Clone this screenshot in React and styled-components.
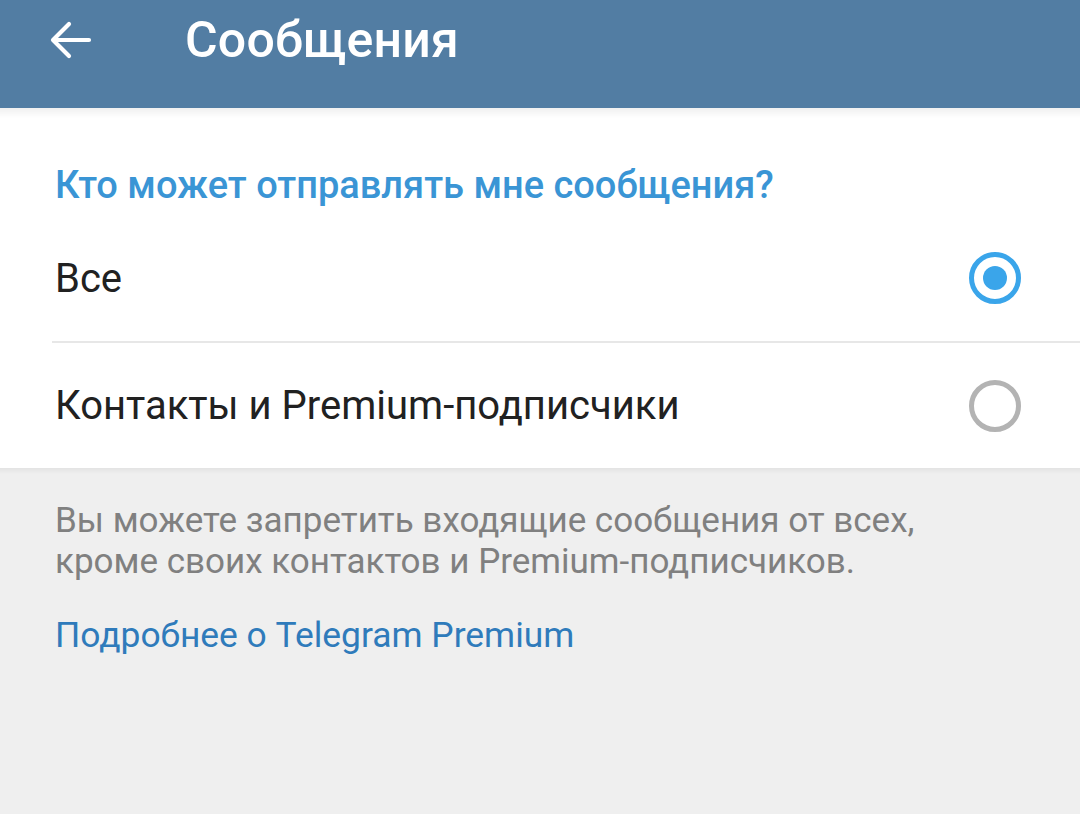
import React from 'react';
import styled, { createGlobalStyle } from 'styled-components';

const GlobalStyle = createGlobalStyle`
    html, body {
        margin: 0;
        padding: 0;
        background: #efefef;
        font-family: Roboto, 'Noto Sans', sans-serif;
    }
`;

const Page = styled.div`
    width: 1080px;
    height: 814px;
    overflow: hidden;
    background: #efefef;
`;

const Header = styled.header`
    position: relative;
    height: 108px;
    background: #527da3;
    display: flex;
    align-items: center;
    padding-bottom: 28px;
    box-sizing: border-box;
    padding-left: 48px;
    z-index: 1;

    &::after {
        content: '';
        position: absolute;
        left: 0;
        right: 0;
        top: 100%;
        height: 10px;
        background: linear-gradient(rgba(0, 0, 0, 0.06), rgba(0, 0, 0, 0));
    }
`;

const BackButton = styled.button`
    border: 0;
    background: none;
    padding: 0;
    width: 46px;
    height: 46px;
    display: flex;
    align-items: center;
    justify-content: center;
    cursor: pointer;
`;

const Title = styled.h1`
    margin: 0 0 0 91px;
    color: #fff;
    font-size: 50px;
    font-weight: 500;
    letter-spacing: 0.2px;
`;

const Card = styled.section`
    background: #fff;
    padding-top: 48px;
`;

const SectionTitle = styled.h2`
    margin: 0;
    padding-left: 55px;
    color: #3a95d5;
    font-size: 38px;
    font-weight: 500;
    line-height: 59px;
`;

const Option = styled.label`
    display: flex;
    align-items: center;
    justify-content: space-between;
    height: ${(props) => props.height}px;
    margin-left: 52px;
    padding-left: 3px;
    padding-right: 59px;
    border-bottom: ${(props) => (props.divider ? '2px solid #e7e7e7' : 'none')};
    cursor: pointer;
`;

const OptionText = styled.span`
    color: #212121;
    font-size: 40px;
`;

const Radio = styled.span`
    width: 52px;
    height: 52px;
    box-sizing: border-box;
    border-radius: 50%;
    border: 5px solid ${(props) => (props.checked ? '#3aa5ea' : '#b3b3b3')};
    display: flex;
    align-items: center;
    justify-content: center;

    &::after {
        content: '';
        width: 24px;
        height: 24px;
        border-radius: 50%;
        background: #3aa5ea;
        display: ${(props) => (props.checked ? 'block' : 'none')};
    }
`;

const Footer = styled.div`
    position: relative;
    padding: 32px 55px 0;

    &::before {
        content: '';
        position: absolute;
        left: 0;
        right: 0;
        top: 0;
        height: 6px;
        background: linear-gradient(rgba(0, 0, 0, 0.05), rgba(0, 0, 0, 0));
    }
`;

const Hint = styled.p`
    margin: 0;
    color: #808080;
    font-size: 35px;
    line-height: 41px;
`;

const MoreLink = styled.a`
    display: block;
    margin-top: 33px;
    color: #2f7bbb;
    font-size: 35.4px;
    line-height: 41px;
    text-decoration: none;
`;

const BackArrow = () => (
    <svg width="42" height="42" viewBox="0 0 42 42" fill="none">
        <path
            d="M39 21H4M19 5L3 21l16 16"
            stroke="#fff"
            strokeWidth="4.2"
            strokeLinecap="round"
            strokeLinejoin="round"
        />
    </svg>
);

const options = [
    { id: 'all', label: 'Все', height: 126 },
    { id: 'contacts', label: 'Контакты и Premium-подписчики', height: 125 },
];

const App = () => {
    const [choice, setChoice] = React.useState('all');

    return (
        <Page>
            <GlobalStyle />
            <Header>
                <BackButton aria-label="Назад">
                    <BackArrow />
                </BackButton>
                <Title>Сообщения</Title>
            </Header>
            <Card>
                <SectionTitle>Кто может отправлять мне сообщения?</SectionTitle>
                {options.map((opt, i) => (
                    <Option
                        key={opt.id}
                        height={opt.height}
                        divider={i < options.length - 1}
                        onClick={() => setChoice(opt.id)}
                    >
                        <OptionText>{opt.label}</OptionText>
                        <Radio checked={choice === opt.id} />
                    </Option>
                ))}
            </Card>
            <Footer>
                <Hint>
                    Вы можете запретить входящие сообщения от всех,
                    <br />
                    кроме своих контактов и Premium-подписчиков.
                </Hint>
                <MoreLink href="#">Подробнее о Telegram Premium</MoreLink>
            </Footer>
        </Page>
    );
};

export default App;
